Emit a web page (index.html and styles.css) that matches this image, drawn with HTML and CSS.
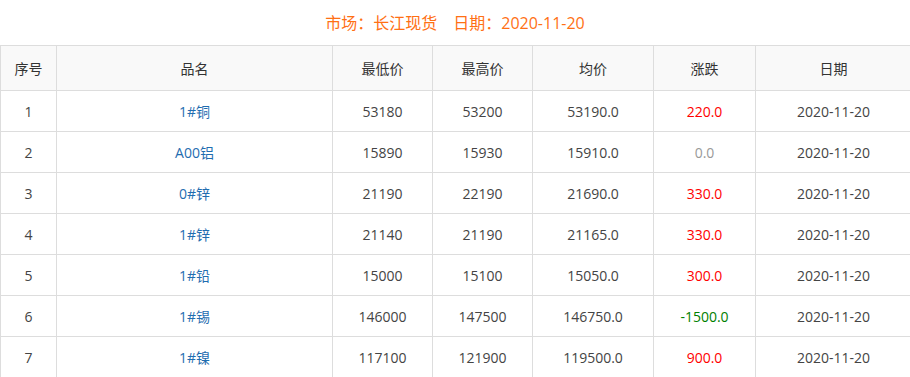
FILE: index.html
```html
<!DOCTYPE html>
<html lang="zh-CN">
<head>
<meta charset="utf-8">
<title>长江现货</title>
<link rel="stylesheet" href="styles.css">
</head>
<body>
<div class="title">市场：长江现货　日期：2020-11-20</div>
<table class="price-table">
  <colgroup>
    <col class="c1"><col class="c2"><col class="c3"><col class="c4"><col class="c5"><col class="c6"><col class="c7">
  </colgroup>
  <thead>
    <tr><th>序号</th><th>品名</th><th>最低价</th><th>最高价</th><th>均价</th><th>涨跌</th><th>日期</th></tr>
  </thead>
  <tbody>
    <tr><td>1</td><td class="name">1#铜</td><td>53180</td><td>53200</td><td>53190.0</td><td class="up">220.0</td><td>2020-11-20</td></tr>
    <tr><td>2</td><td class="name">A00铝</td><td>15890</td><td>15930</td><td>15910.0</td><td class="flat">0.0</td><td>2020-11-20</td></tr>
    <tr><td>3</td><td class="name">0#锌</td><td>21190</td><td>22190</td><td>21690.0</td><td class="up">330.0</td><td>2020-11-20</td></tr>
    <tr><td>4</td><td class="name">1#锌</td><td>21140</td><td>21190</td><td>21165.0</td><td class="up">330.0</td><td>2020-11-20</td></tr>
    <tr><td>5</td><td class="name">1#铅</td><td>15000</td><td>15100</td><td>15050.0</td><td class="up">300.0</td><td>2020-11-20</td></tr>
    <tr><td>6</td><td class="name">1#锡</td><td>146000</td><td>147500</td><td>146750.0</td><td class="down">-1500.0</td><td>2020-11-20</td></tr>
    <tr><td>7</td><td class="name">1#镍</td><td>117100</td><td>121900</td><td>119500.0</td><td class="up">900.0</td><td>2020-11-20</td></tr>
  </tbody>
</table>
</body>
</html>
```
FILE: styles.css
```css
html, body {
  margin: 0;
  padding: 0;
  background: #fff;
}
body {
  font-family: "Open Sans", "Noto Sans CJK SC", sans-serif;
  font-size: 14px;
  color: #444;
  overflow: hidden;
}
.title {
  height: 45px;
  line-height: 46px;
  text-align: center;
  color: #ff7014;
  font-size: 16px;
}
.price-table {
  width: 911px;
  border-collapse: collapse;
  table-layout: fixed;
}
.c1 { width: 56px; }
.c2 { width: 276px; }
.c3 { width: 100px; }
.c4 { width: 100px; }
.c5 { width: 121px; }
.c6 { width: 102px; }
.c7 { width: 156px; }
.price-table th,
.price-table td {
  border: 1px solid #dddddd;
  text-align: center;
  padding: 0;
  font-weight: normal;
}
.price-table th {
  height: 44px;
  background: #f9f9f9;
  color: #333;
}
.price-table td {
  height: 40px;
}
.name { color: #1f6db0; }
.up { color: #ff0000; }
.down { color: #008000; }
.flat { color: #999; }
```
